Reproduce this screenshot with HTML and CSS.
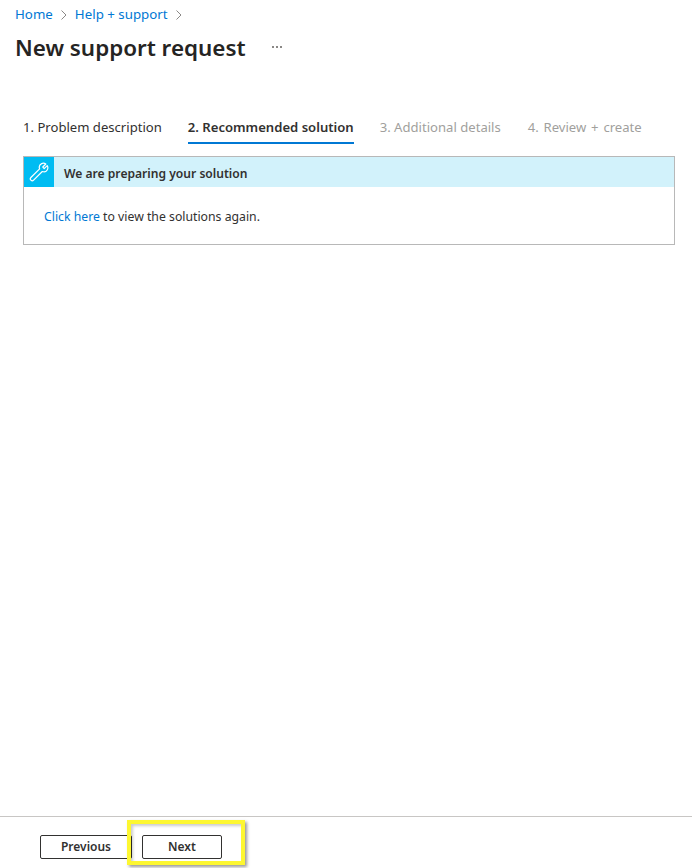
FILE: index.html
```html
<!DOCTYPE html>
<html lang="en">
<head>
    <meta charset="UTF-8">
    <meta name="viewport" content="width=device-width, initial-scale=1.0">
    <title>New support request</title>
    <link rel="stylesheet" href="styles.css">
</head>
<body>
<div class="page">
    <div class="breadcrumb">
        <a class="crumb-link">Home</a>
        <svg class="crumb-sep" width="6" height="10" viewBox="0 0 6 10"><path d="M0.5 0.5L5 5L0.5 9.5" fill="none" stroke="#8a8886"/></svg>
        <a class="crumb-link">Help + support</a>
        <svg class="crumb-sep" width="6" height="10" viewBox="0 0 6 10"><path d="M0.5 0.5L5 5L0.5 9.5" fill="none" stroke="#8a8886"/></svg>
    </div>
    <div class="title-row">
        <h1 class="page-title">New support request</h1>
        <span class="more-dots">
            <i></i><i></i><i></i>
        </span>
    </div>

    <div class="tabs">
        <span class="tab">1. Problem description</span>
        <span class="tab tab-active">2. Recommended solution</span>
        <span class="tab tab-disabled">3. Additional details</span>
        <span class="tab tab-disabled tab-last">4. Review + create</span>
    </div>

    <div class="panel">
        <div class="panel-header">
            <span class="panel-icon">
                <svg width="20" height="20" viewBox="0 0 20 20"><path d="M12.6 1.6C14 1 15.6 1.2 16.8 2L13.8 5L15.2 6.6L18.2 3.6C19 4.9 19 6.7 18.2 8C17.2 9.6 15.1 10.2 13.3 9.5L4.6 18.2C3.8 19 2.7 19 1.9 18.2C1.1 17.4 1.1 16.3 1.9 15.5L10.6 6.8C9.8 4.6 10.6 2.6 12.6 1.6Z" fill="none" stroke="#fff" stroke-width="1.2" stroke-linejoin="round"/></svg>
            </span>
            <span class="panel-title">We are preparing your solution</span>
        </div>
        <div class="panel-body">
            <a class="link">Click here</a> to view the solutions again.
        </div>
    </div>

    <div class="footer">
        <button class="btn btn-prev">Previous</button>
        <button class="btn btn-next">Next</button>
        <div class="highlight"></div>
    </div>
</div>
</body>
</html>
```

FILE: styles.css
```css
* {
    box-sizing: border-box;
}

body {
    margin: 0;
    font-family: "Noto Sans", "Open Sans", sans-serif;
    font-size: 13px;
    color: #323130;
    background: #fff;
}

.page {
    height: 868px;
    display: flex;
    flex-direction: column;
    overflow: hidden;
}

.breadcrumb {
    display: flex;
    align-items: center;
    height: 18px;
    margin: 5px 0 0 15px;
}

.crumb-link {
    color: #0078d4;
    font-size: 13.3px;
}

.crumb-sep {
    margin: 1px 8px 0 8px;
}

.title-row {
    display: flex;
    align-items: center;
    margin: 8px 0 0 15px;
    height: 32px;
}

.page-title {
    margin: 0;
    font-size: 22.4px;
    font-weight: 600;
    color: #252423;
}

.more-dots {
    display: flex;
    gap: 2px;
    margin-left: 26px;
}

.more-dots i {
    width: 2px;
    height: 2px;
    background: #8a8886;
}

.tabs {
    display: flex;
    gap: 26px;
    margin: 50px 0 0 23px;
    height: 31px;
}

.tab {
    font-size: 13.1px;
    padding-top: 5px;
    white-space: nowrap;
}

.tab-active {
    font-weight: 600;
    border-bottom: 2px solid #0078d4;
}

.tab-disabled {
    color: #a19f9d;
}

.tab-last {
    margin-left: 1px;
    word-spacing: 1.4px;
}

.panel {
    margin: 12px 17px 0 23px;
    height: 89px;
    border: 1px solid #b8b8b8;
}

.panel-header {
    display: flex;
    align-items: center;
    height: 30px;
    background: #d2f2fb;
}

.panel-icon {
    display: flex;
    align-items: center;
    justify-content: center;
    width: 30px;
    height: 30px;
    background: #00bcf2;
}

.panel-title {
    margin-left: 10px;
    padding-top: 3px;
    font-weight: 600;
    font-size: 12.1px;
}

.panel-body {
    padding: 21px 0 0 20px;
    font-size: 12.25px;
}

.link {
    color: #0078d4;
}

.footer {
    position: relative;
    margin-top: auto;
    height: 52px;
    border-top: 1px solid #c8c6c4;
    display: flex;
    align-items: flex-start;
    gap: 10px;
    padding: 18px 0 0 40px;
}

.btn {
    height: 24px;
    padding: 0 0 2px;
    background: #fff;
    border: 1px solid #323130;
    border-radius: 2px;
    font-family: inherit;
    font-size: 12px;
    font-weight: 600;
    color: #323130;
}

.btn-prev {
    width: 92px;
}

.btn-next {
    width: 80px;
}

/* annotation drawn over the buttons */
.highlight {
    position: absolute;
    left: 127px;
    top: 3px;
    width: 118px;
    height: 45px;
    border: 4px solid #fdf731;
    box-shadow: 2px 2px 3px rgba(0, 0, 0, 0.4), inset 2px 2px 3px rgba(0, 0, 0, 0.2);
}
```
